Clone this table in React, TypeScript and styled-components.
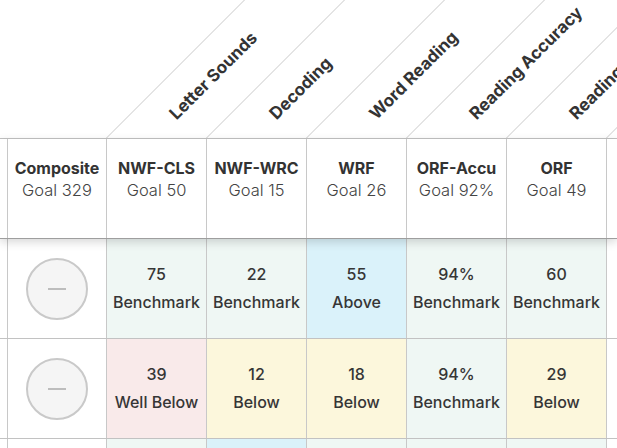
import React from 'react';
import styled, { createGlobalStyle } from 'styled-components';

const GlobalStyle = createGlobalStyle`
  html, body { margin: 0; padding: 0; background: #fff; }
  body {
    font-family: Inter, Roboto, "Liberation Sans", Arial, sans-serif;
    color: #333;
    overflow: hidden;
  }
`;

type Level = 'bench' | 'below' | 'well' | 'above';

const levelBg: Record<Level, string> = {
  bench: '#eff7f4',
  below: '#fcf7dc',
  well: '#f9eaea',
  above: '#daf2fa',
};

const Grid = styled.div`
  width: 617px;
  height: 448px;
  overflow: hidden;
  display: flex;
  flex-direction: column;
`;

const DiagRow = styled.div`
  display: flex;
  flex: 0 0 138px;
  border-bottom: 1px solid #c2c2c2;
`;

const Stub = styled.div`
  flex: 0 0 7px;
`;

const CompositeSpace = styled.div`
  flex: 0 0 99px;
`;

const DiagCell = styled.div<{ $line: boolean }>`
  position: relative;
  flex: 0 0 100px;
  min-width: 0;
  box-sizing: border-box;
  display: flex;
  align-items: flex-end;
  padding: 0 0 16px 72px;
  &::before {
    content: '';
    display: ${(p) => (p.$line ? 'block' : 'none')};
    position: absolute;
    left: 0;
    bottom: 0;
    width: 100%;
    height: 100%;
    border-left: 1px solid #cacaca;
    transform-origin: left bottom;
    transform: skewX(-45deg);
  }
`;

const DiagLabel = styled.span`
  display: block;
  flex: 0 0 auto;
  white-space: nowrap;
  font-weight: 700;
  font-size: 17px;
  line-height: 16px;
  color: #333;
  transform-origin: left bottom;
  transform: rotate(-45deg);
`;

const HeadRow = styled.div`
  display: flex;
  flex: 0 0 99px;
  border-bottom: 1px solid #9e9e9e;
  background: #fff;
  position: relative;
  z-index: 1;
  box-shadow: 0 3px 9px rgba(0, 0, 0, 0.16);
`;

const Row = styled.div`
  display: flex;
  flex: 0 0 99px;
  border-bottom: 1px solid #c2c2c2;
`;

const StubCell = styled.div`
  flex: 0 0 7px;
  background: #fff;
`;

const HeadCell = styled.div<{ $w: number }>`
  flex: 0 0 ${(p) => p.$w}px;
  min-width: 0;
  box-sizing: border-box;
  border-left: 1px solid #c8c8c8;
  padding-top: 18px;
  display: flex;
  flex-direction: column;
  align-items: center;
  line-height: 22px;
  font-size: 16px;
  white-space: nowrap;
`;

const HeadName = styled.span`
  font-weight: 700;
  color: #333;
`;

const HeadGoal = styled.span`
  font-weight: 300;
  font-size: 16.5px;
  color: #444;
`;

const CompositeCell = styled.div`
  flex: 0 0 99px;
  box-sizing: border-box;
  border-left: 1px solid #c8c8c8;
  background: #fff;
  display: flex;
  align-items: center;
  justify-content: center;
`;

const Circle = styled.div`
  width: 62px;
  height: 62px;
  box-sizing: border-box;
  border-radius: 50%;
  border: 2px solid #c9c9c9;
  background: #f5f5f5;
  display: flex;
  align-items: center;
  justify-content: center;
`;

const Dash = styled.span`
  width: 18px;
  height: 2px;
  background: #bdbdbd;
`;

const ScoreCell = styled.div<{ $level?: Level }>`
  flex: 0 0 100px;
  min-width: 0;
  box-sizing: border-box;
  border-left: 1px solid #c8c8c8;
  background: ${(p) => (p.$level ? levelBg[p.$level] : '#fff')};
  display: flex;
  flex-direction: column;
  align-items: center;
  justify-content: center;
  padding-bottom: 1px;
  font-size: 16px;
  font-weight: 500;
  line-height: 28px;
  color: #363636;
  white-space: nowrap;
`;

const TailCell = styled.div`
  flex: 1 0 11px;
  box-sizing: border-box;
  border-left: 1px solid #c8c8c8;
  background: #fff;
`;

const diagLabels = ['Letter Sounds', 'Decoding', 'Word Reading', 'Reading Accuracy', 'Reading Fluency', ''];

const heads = [
  { name: 'NWF-CLS', goal: 'Goal 50' },
  { name: 'NWF-WRC', goal: 'Goal 15' },
  { name: 'WRF', goal: 'Goal 26' },
  { name: 'ORF-Accu', goal: 'Goal 92%' },
  { name: 'ORF', goal: 'Goal 49' },
];

const labelOf: Record<Level, string> = {
  bench: 'Benchmark',
  below: 'Below',
  well: 'Well Below',
  above: 'Above',
};

const rows: { score: string; level: Level }[][] = [
  [
    { score: '75', level: 'bench' },
    { score: '22', level: 'bench' },
    { score: '55', level: 'above' },
    { score: '94%', level: 'bench' },
    { score: '60', level: 'bench' },
  ],
  [
    { score: '39', level: 'well' },
    { score: '12', level: 'below' },
    { score: '18', level: 'below' },
    { score: '94%', level: 'bench' },
    { score: '29', level: 'below' },
  ],
];

const lastRow: Level[] = ['bench', 'above', 'bench', 'bench', 'bench'];

export default function App() {
  return (
    <>
      <GlobalStyle />
      <Grid>
        <DiagRow>
          <Stub />
          <CompositeSpace />
          {diagLabels.map((l, i) => (
            <DiagCell key={i} $line>
              {l && <DiagLabel>{l}</DiagLabel>}
            </DiagCell>
          ))}
        </DiagRow>
        <HeadRow>
          <StubCell />
          <HeadCell $w={99}>
            <HeadName>Composite</HeadName>
            <HeadGoal>Goal 329</HeadGoal>
          </HeadCell>
          {heads.map((h) => (
            <HeadCell key={h.name} $w={100}>
              <HeadName>{h.name}</HeadName>
              <HeadGoal>{h.goal}</HeadGoal>
            </HeadCell>
          ))}
          <TailCell />
        </HeadRow>
        {rows.map((r, ri) => (
          <Row key={ri}>
            <StubCell />
            <CompositeCell>
              <Circle>
                <Dash />
              </Circle>
            </CompositeCell>
            {r.map((c, ci) => (
              <ScoreCell key={ci} $level={c.level}>
                <span>{c.score}</span>
                <span>{labelOf[c.level]}</span>
              </ScoreCell>
            ))}
            <TailCell />
          </Row>
        ))}
        <Row>
          <StubCell />
          <CompositeCell />
          {lastRow.map((lv, i) => (
            <ScoreCell key={i} $level={lv} />
          ))}
          <TailCell />
        </Row>
      </Grid>
    </>
  );
}
